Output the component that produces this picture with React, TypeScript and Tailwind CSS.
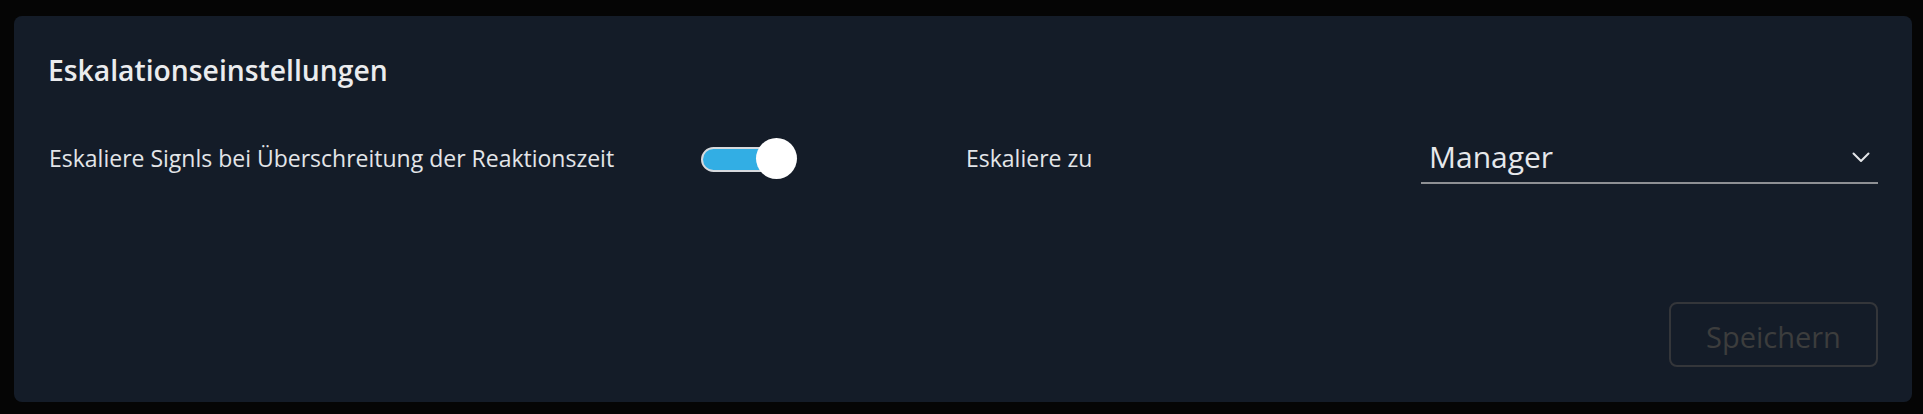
import React from "react";

export default function App() {
  return (
    <div className="w-full h-[414px] bg-[#050505] pt-[16px] pl-[14px] pr-[11px]" style={{ fontFamily: '"Open Sans", sans-serif' }}>
      <div className="h-[386px] rounded-[8px] bg-[#141c28] flex flex-col px-[34px] pt-[40px] pb-[35px]">
        <h2 className="text-[28.3px] leading-none font-semibold text-[#ebecee]">Eskalationseinstellungen</h2>
        <div className="mt-[48px] h-[52px] grid grid-cols-[653px_264px_456px_1fr] items-center">
          <div className="text-[23px] leading-none text-[#e3e5e8] pl-[1px]">Eskaliere Signls bei Überschreitung der Reaktionszeit</div>
          <div className="relative w-[96px] h-[41px]">
            <div className="absolute left-0 top-[9px] w-[86px] h-[25px] rounded-full bg-[#32aee4] border-2 border-[#d6d9dd]" />
            <div className="absolute left-[55px] top-0 w-[41px] h-[41px] rounded-full bg-white" />
          </div>
          <div className="text-[23px] leading-none text-[#e3e5e8] pl-[1px]">Eskaliere zu</div>
          <div className="h-full flex items-center justify-between border-b-2 border-[#8e9094] pl-[8px] pr-[8px]">
            <span className="text-[30px] leading-none text-[#e6e8eb]">Manager</span>
            <svg width="18" height="11" viewBox="0 0 18 11" fill="none">
              <polyline points="1.5,1.5 9,9 16.5,1.5" stroke="#e3e5e8" strokeWidth="2" strokeLinecap="round" strokeLinejoin="round" />
            </svg>
          </div>
        </div>
        <div className="mt-auto flex justify-end">
          <button className="w-[209px] h-[65px] rounded-[8px] border-2 border-[#34363a] text-[29px] leading-none pt-[3px] text-[#3c3d3d] flex items-center justify-center">Speichern</button>
        </div>
      </div>
    </div>
  );
}
